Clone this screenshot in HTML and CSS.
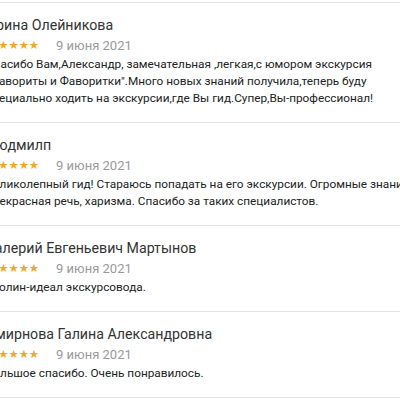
FILE: index.html
```html
<!DOCTYPE html>
<html>
<head>
    <title>Отзывы</title>
    <link rel="stylesheet" href="styles.css">
</head>
<body>
    <ul class="reviews">
        <li class="review">
            <div class="review-name">Ирина Олейникова</div>
            <div class="review-meta">
                <span class="stars">★★★★★</span>
                <span class="review-date">9 июня 2021</span>
            </div>
            <p class="review-text">Спасибо Вам,Александр, замечательная ,легкая,с юмором экскурсия &quot;Фавориты и Фаворитки&quot;.Много новых знаний получила,теперь буду специально ходить на экскурсии,где Вы гид.Супер,Вы-профессионал!</p>
        </li>
        <li class="review">
            <div class="review-name">Людмилп</div>
            <div class="review-meta">
                <span class="stars">★★★★★</span>
                <span class="review-date">9 июня 2021</span>
            </div>
            <p class="review-text">Великолепный гид! Стараюсь попадать на его экскурсии. Огромные знания, прекрасная речь, харизма. Спасибо за таких специалистов.</p>
        </li>
        <li class="review">
            <div class="review-name">Валерий Евгеньевич Мартынов</div>
            <div class="review-meta">
                <span class="stars">★★★★★</span>
                <span class="review-date">9 июня 2021</span>
            </div>
            <p class="review-text">Столин-идеал экскурсовода.</p>
        </li>
        <li class="review">
            <div class="review-name">Смирнова Галина Александровна</div>
            <div class="review-meta">
                <span class="stars">★★★★★</span>
                <span class="review-date">9 июня 2021</span>
            </div>
            <p class="review-text">Большое спасибо. Очень понравилось.</p>
        </li>
    </ul>
</body>
</html>
```
FILE: styles.css
```css
html, body {
    overflow: hidden;
}

body {
    margin: 0;
    background-color: #fff;
    font-family: Roboto, Arial, sans-serif;
    color: #222;
}

.reviews {
    list-style: none;
    margin: 2px 0 0 -14px;
    padding: 0;
    width: 430px;
    border-top: 1px solid #e3e3e3;
}

.review {
    padding: 12px 0 15px;
    border-bottom: 1px solid #e3e3e3;
}

.review-name {
    font-size: 14.2px;
    line-height: 20px;
    color: #333;
}

.review-meta {
    display: flex;
    align-items: center;
    gap: 17px;
    height: 20px;
}

.stars {
    margin-left: 2px;
    color: #f5a524;
    font-family: "DejaVu Sans", sans-serif;
    font-size: 11.5px;
    letter-spacing: -0.1px;
}

.review-date {
    font-size: 13px;
    color: #9a9a9a;
}

.review-text {
    margin: 1px 0 0;
    font-size: 11.8px;
    line-height: 17px;
}
```
